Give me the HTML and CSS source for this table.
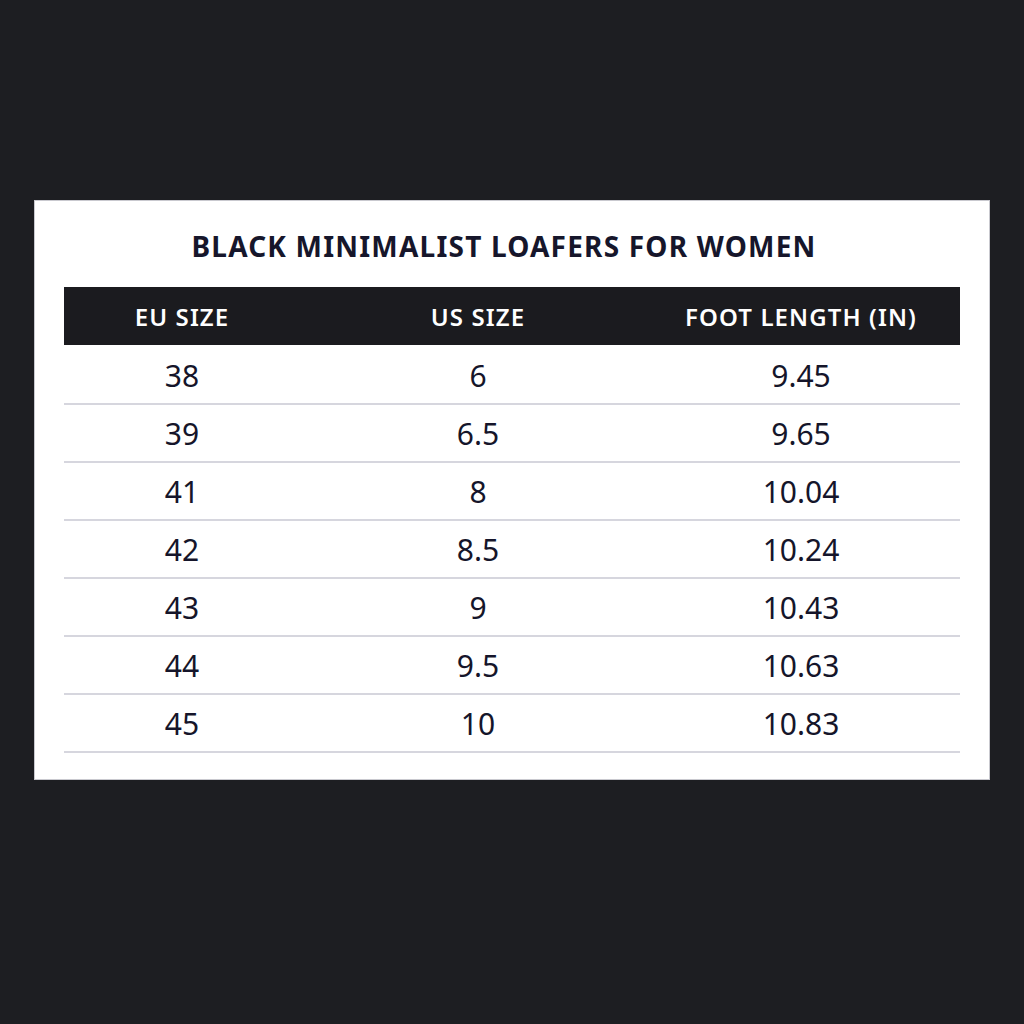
FILE: index.html
```html
<!DOCTYPE html>
<html lang="en">
<head>
<meta charset="utf-8">
<title>Black Minimalist Loafers for Women – Size Chart</title>
<link rel="stylesheet" href="styles.css">
</head>
<body>
<main class="page">
  <section class="card">
    <h1 class="title">BLACK MINIMALIST LOAFERS FOR WOMEN</h1>
    <div class="table">
      <div class="row head">
        <div class="cell c1">EU SIZE</div>
        <div class="cell c2">US SIZE</div>
        <div class="cell c3">FOOT LENGTH (IN)</div>
      </div>
      <div class="row"><div class="cell c1">38</div><div class="cell c2">6</div><div class="cell c3">9.45</div></div>
      <div class="row"><div class="cell c1">39</div><div class="cell c2">6.5</div><div class="cell c3">9.65</div></div>
      <div class="row"><div class="cell c1">41</div><div class="cell c2">8</div><div class="cell c3">10.04</div></div>
      <div class="row"><div class="cell c1">42</div><div class="cell c2">8.5</div><div class="cell c3">10.24</div></div>
      <div class="row"><div class="cell c1">43</div><div class="cell c2">9</div><div class="cell c3">10.43</div></div>
      <div class="row"><div class="cell c1">44</div><div class="cell c2">9.5</div><div class="cell c3">10.63</div></div>
      <div class="row"><div class="cell c1">45</div><div class="cell c2">10</div><div class="cell c3">10.83</div></div>
    </div>
  </section>
</main>
</body>
</html>
```

FILE: styles.css
```css
html, body {
  margin: 0;
  padding: 0;
}
body {
  width: 1024px;
  height: 1024px;
  background: #1d1e22;
  font-family: "Noto Sans", "Open Sans", sans-serif;
  color: #15152a;
}
.page {
  padding: 200px 34px 0 34px;
}
.card {
  width: 956px;
  height: 580px;
  box-sizing: border-box;
  background: #ffffff;
  border: 1px solid #c9c9cf;
  padding: 0 29px;
}
.title {
  margin: 0;
  height: 86px;
  display: flex;
  align-items: center;
  justify-content: center;
  padding-top: 4px;
  padding-right: 16px;
  box-sizing: border-box;
  font-size: 28px;
  font-weight: 700;
  letter-spacing: 1.2px;
  color: #16162b;
}
.table {
  display: flex;
  flex-direction: column;
}
.row {
  display: grid;
  grid-template-columns: 236px 356px 304px;
  height: 58px;
  align-items: center;
  border-bottom: 2px solid #d6d6de;
  box-sizing: border-box;
  font-size: 30px;
}
.row.head {
  background: #1b1b1f;
  border-bottom: 0;
  margin-bottom: 2px;
  color: #ffffff;
  font-size: 24px;
  font-weight: 600;
  letter-spacing: 1.1px;
}
.cell {
  text-align: center;
}
.head .cell {
  padding-top: 0;
}
.c3 {
  padding-right: 14px;
}
```
